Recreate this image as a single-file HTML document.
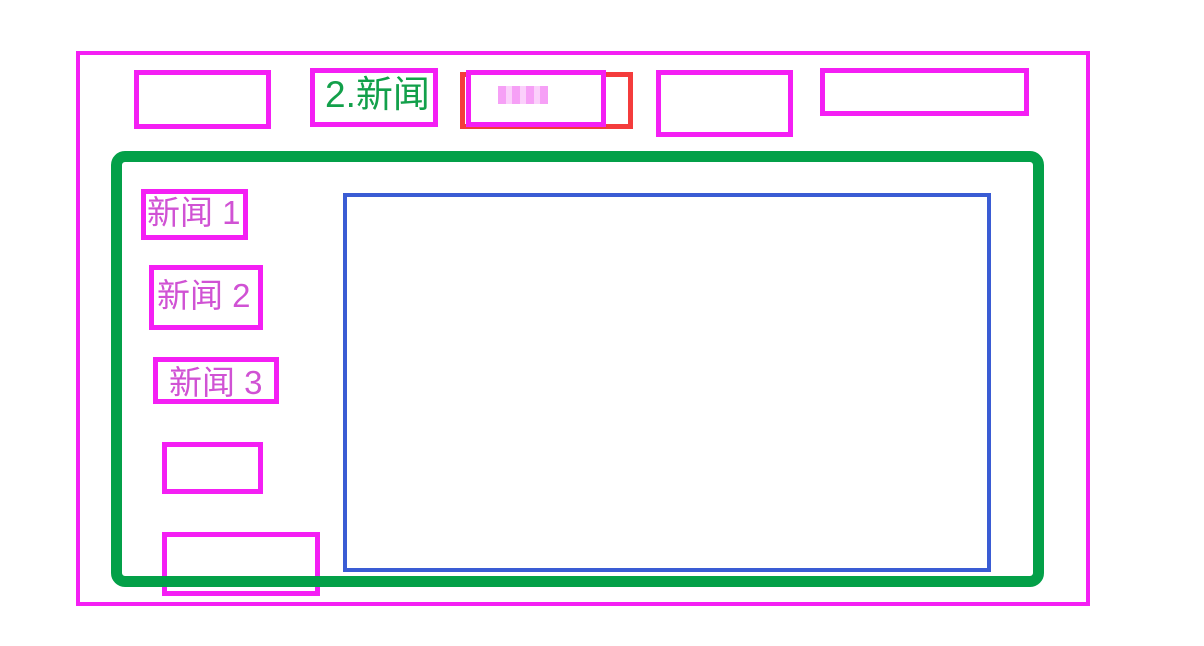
<!DOCTYPE html>
<html><head><meta charset="utf-8"><style>
body{margin:0;width:1204px;height:646px;background:#fff;position:relative;overflow:hidden;font-family:"Liberation Sans","Noto Sans CJK SC",sans-serif}
.b{position:absolute;box-sizing:border-box;border:5px solid #f41ff4}
.t{position:absolute;color:#d052d4;font-size:33px;line-height:1;white-space:nowrap}
</style></head><body>
<div class="b" style="left:76px;top:51px;width:1014px;height:555px;border-width:4px"></div>
<div class="b" style="left:134px;top:70px;width:137px;height:59px"></div>
<div class="b" style="left:310px;top:68px;width:128px;height:59px"></div>
<div class="t" style="left:325px;top:76px;color:#12a04a;font-size:37px">2.新闻</div>
<div class="b" style="left:460px;top:72px;width:173px;height:57px;border-color:#f43c3c"></div>
<div class="b" style="left:466px;top:70px;width:140px;height:57px;background:#fff"></div>
<div style="position:absolute;left:498px;top:86px;width:50px;height:18px;background:repeating-linear-gradient(90deg,#f6a0f6 0 8px,#fbd0fb 8px 14px)"></div>
<div class="b" style="left:656px;top:70px;width:137px;height:67px"></div>
<div class="b" style="left:820px;top:68px;width:209px;height:48px"></div>
<div class="b" style="left:162px;top:532px;width:158px;height:64px"></div>
<div class="b" style="left:111px;top:151px;width:933px;height:436px;border:11px solid #03a048;border-radius:14px"></div>
<div class="b" style="left:343px;top:193px;width:648px;height:379px;border:4px solid #3a5cd4"></div>
<div class="b" style="left:141px;top:189px;width:107px;height:51px"></div>
<div class="t" style="left:147px;top:196px">新闻 1</div>
<div class="b" style="left:149px;top:265px;width:114px;height:65px"></div>
<div class="t" style="left:157px;top:279px">新闻 2</div>
<div class="b" style="left:153px;top:357px;width:126px;height:47px"></div>
<div class="t" style="left:169px;top:366px">新闻 3</div>
<div class="b" style="left:162px;top:442px;width:101px;height:52px"></div>
</body></html>
